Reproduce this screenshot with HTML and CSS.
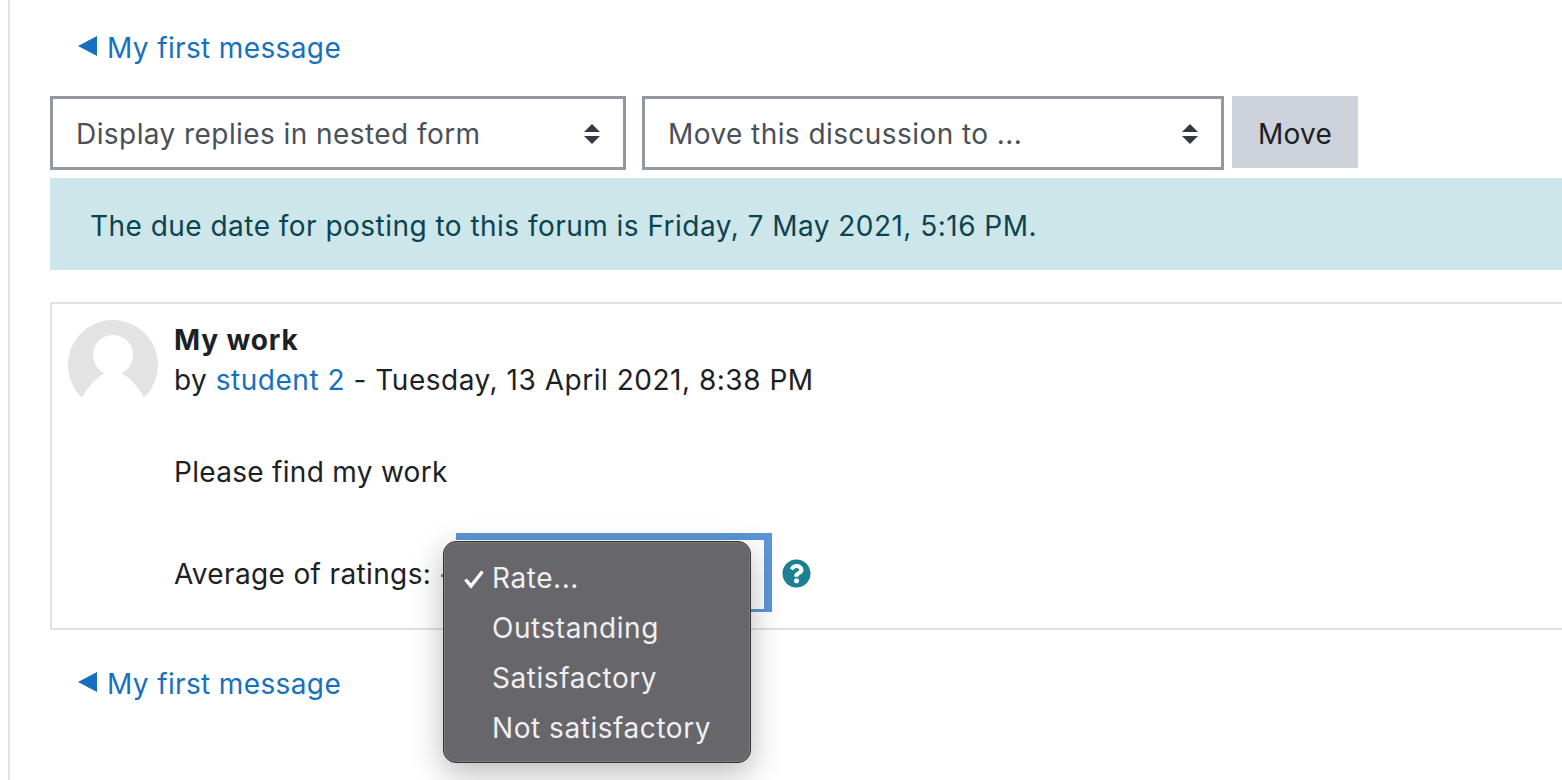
FILE: index.html
```html
<!DOCTYPE html>
<html lang="en">
<head>
<meta charset="utf-8">
<title>My first message</title>
<link rel="stylesheet" href="styles.css">
</head>
<body>
<main class="page">
  <nav class="nav-link nav-top"><a href="#"><span class="arrow"></span>My first message</a></nav>
  <div class="controls">
    <div class="select select-display"><span>Display replies in nested form</span>
      <svg class="updown" viewBox="0 0 16 20"><path d="M8 0l8 8H0zM0 12h16l-8 8z"/></svg></div>
    <div class="select select-move"><span>Move this discussion to ...</span>
      <svg class="updown" viewBox="0 0 16 20"><path d="M8 0l8 8H0zM0 12h16l-8 8z"/></svg></div>
    <button class="btn">Move</button>
  </div>
  <div class="notice">The due date for posting to this forum is Friday, 7 May 2021, 5:16 PM.</div>
  <article class="post">
    <div class="avatar">
      <svg viewBox="0 0 90 90"><circle cx="45" cy="45" r="45" fill="#e3e3e3"/><circle cx="45" cy="35" r="20" fill="#fff"/><path d="M10 90L14 78C20 66 28 58 37 53L53 53C62 58 70 66 76 78L80 90z" fill="#fff"/></svg>
    </div>
    <div class="post-main">
      <h3 class="post-title">My work</h3>
      <div class="byline">by <a href="#">student 2</a> - Tuesday, 13 April 2021, 8:38 PM</div>
      <p class="post-body">Please find my work</p>
      <div class="rating">
        <span class="rating-label">Average of ratings:</span>
        <div class="rate-select"></div>
        <svg class="help" viewBox="0 0 512 512"><circle cx="256" cy="256" r="200" fill="#fff"/><path fill="#1a8092" d="M504 256c0 136.997-111.043 248-248 248S8 392.997 8 256C8 119.083 119.043 8 256 8s248 111.083 248 248zM262.655 90c-54.497 0-89.255 22.957-116.549 63.758-3.536 5.286-2.353 12.415 2.715 16.258l34.699 26.31c5.205 3.947 12.621 3.008 16.665-2.122 17.864-22.658 30.113-35.797 57.303-35.797 20.429 0 45.698 13.148 45.698 32.958 0 14.976-12.363 22.667-32.534 33.976C247.128 238.528 216 254.941 216 296v4c0 6.627 5.373 12 12 12h56c6.627 0 12-5.373 12-12v-1.333c0-28.462 83.186-29.647 83.186-106.667 0-58.002-60.165-102-116.531-102zM256 338c-25.365 0-46 20.635-46 46 0 25.364 20.635 46 46 46s46-20.636 46-46c0-25.365-20.635-46-46-46z"/></svg>
      </div>
    </div>
  </article>
  <nav class="nav-link nav-bottom"><a href="#"><span class="arrow"></span>My first message</a></nav>
  <ul class="popup">
    <li><svg class="check" viewBox="0 0 20 20"><path d="M1.500 10.500L7 17L18.500 2.500" fill="none" stroke="#fff" stroke-width="3.400"/></svg>Rate...</li>
    <li>Outstanding</li>
    <li>Satisfactory</li>
    <li>Not satisfactory</li>
  </ul>
</main>
</body>
</html>
```
FILE: styles.css
```css
* { box-sizing: border-box; }
html, body { margin: 0; height: 100%; background: #fff; overflow: hidden; }
body { font-family: Inter, "Liberation Sans", sans-serif; font-size: 28px; letter-spacing: .4px; color: #1d2125; }
a { color: #1670c0; text-decoration: none; }
.page {
  position: relative;
  height: 780px;
  margin-left: 8px;
  border-left: 2px solid #e2e4e8;
  padding: 0 0 0 40px;
}
.nav-link { padding-left: 28px; line-height: 36px; letter-spacing: .37px; }
.nav-top { padding-top: 30px; height: 96px; }
.nav-bottom { padding-top: 36px; }
.arrow {
  display: inline-block;
  width: 0; height: 0;
  border-style: solid;
  border-width: 10px 19px 10px 0;
  border-color: transparent #1670c0 transparent transparent;
  margin-right: 10px;
  vertical-align: 2px;
}
.controls { display: flex; align-items: flex-start; height: 82px; }
.select {
  height: 74px;
  border: 3px solid #9298a1;
  display: flex;
  align-items: center;
  justify-content: space-between;
  padding: 2px 23px 0 23px;
  color: #495057;
  background: #fff;
  letter-spacing: .43px;
}
.select-display { width: 576px; margin-right: 16px; }
.select-move { width: 582px; margin-right: 8px; }
.updown { width: 16px; height: 20px; fill: #343a40; }
.btn {
  width: 126px;
  height: 72px;
  background: #ced2da;
  border: 0;
  font: inherit;
  letter-spacing: .2px;
  color: #1d2125;
  padding: 4px 0 0;
}
.notice {
  height: 92px;
  background: #cde6ea;
  color: #0b4450;
  padding: 0 40px;
  line-height: 96px;
  letter-spacing: .47px;
  margin-bottom: 32px;
}
.post {
  display: flex;
  height: 328px;
  border: 2px solid #dee2e6;
  border-right: 0;
  padding: 16px 0 0 16px;
  gap: 16px;
}
.avatar { width: 90px; height: 90px; flex: none; }
.avatar svg { display: block; width: 90px; height: 90px; }
.post-main { flex: 1; }
.post-title { margin: 0; font-size: 28px; font-weight: 700; letter-spacing: .85px; line-height: 40px; }
.byline { line-height: 40px; letter-spacing: .52px; }
.post-body { margin: 52px 0 0; line-height: 40px; letter-spacing: .3px; }
.rating { display: flex; align-items: center; margin-top: 42px; height: 80px; letter-spacing: .36px; }
.rate-select {
  position: relative;
  align-self: flex-start;
  width: 316px;
  height: 79px;
  margin: -1px 0 0 25px;
  border-style: solid;
  border-color: #5b96d6;
  border-width: 7px 8px 3px 0;
  background: #fff;
}
.rate-select::before {
  content: "";
  position: absolute;
  left: -15px;
  top: 34px;
  width: 3px;
  height: 3px;
  background: #5b96d6;
}
.help { width: 29px; height: 29px; margin: 0 0 2px 10px; }
.popup {
  position: absolute;
  left: 433px;
  top: 541px;
  width: 308px;
  height: 222px;
  margin: 0;
  padding: 11px 0 0 48px;
  list-style: none;
  background: #67666b;
  border: 1px solid #333;
  border-radius: 13px;
  box-shadow: 0 10px 32px rgba(0,0,0,.28), inset 0 0 0 1px rgba(255,255,255,.15);
  color: #f0f0f1;
  letter-spacing: .55px;
}
.popup li { height: 50px; line-height: 50px; position: relative; }
.check { position: absolute; left: -28px; top: 16px; width: 20px; height: 20px; }
```
